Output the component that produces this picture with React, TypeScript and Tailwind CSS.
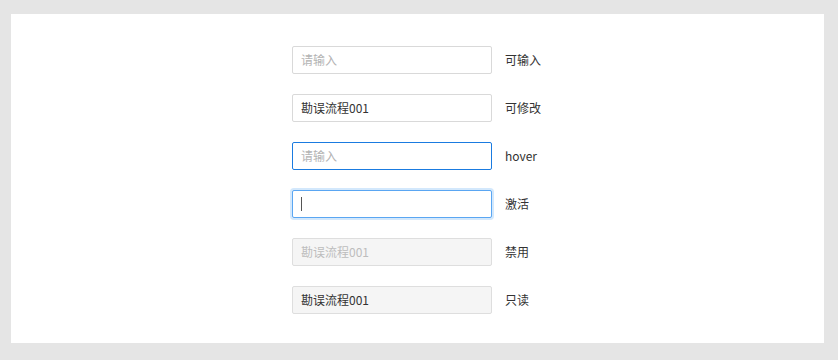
const font = "font-['Noto_Sans_CJK_SC','Noto_Sans',sans-serif]";

const rows = [
  { label: "可输入", value: "", placeholder: "请输入", kind: "default" },
  { label: "可修改", value: "勘误流程001", placeholder: "", kind: "default" },
  { label: "hover", value: "", placeholder: "请输入", kind: "hover" },
  { label: "激活", value: "", placeholder: "", kind: "focus" },
  { label: "禁用", value: "勘误流程001", placeholder: "", kind: "disabled" },
  { label: "只读", value: "勘误流程001", placeholder: "", kind: "readonly" },
];

const boxClass: Record<string, string> = {
  default: "border-[#d9d9d9] bg-white text-[#333]",
  hover: "border-[#1a7be0] bg-white text-[#333]",
  focus: "border-[#5aa6f2] bg-white text-[#333] shadow-[0_0_0_2px_#d3e8fc]",
  disabled: "border-[#dedede] bg-[#f5f5f5] text-[#bdbdbd]",
  readonly: "border-[#dedede] bg-[#f5f5f5] text-[#333]",
};

export default function App() {
  return (
    <div className={`h-[360px] w-[838px] bg-[#e5e5e5] pl-[11px] pt-[14px] ${font}`}>
      <div className="flex h-[329px] w-[813px] flex-col gap-5 bg-white pl-[281px] pt-[32px]">
        {rows.map((r, i) => (
          <div key={i} className="flex h-[28px] items-center">
            <div
              className={`flex h-[28px] w-[200px] items-center rounded-[2px] border px-2 text-[12px] ${boxClass[r.kind]}`}
            >
              {r.kind === "focus" ? (
                <span className="h-[14px] w-px bg-[#555]" />
              ) : r.value ? (
                <span>{r.value}</span>
              ) : (
                <span className="text-[#b3b3b3]">{r.placeholder}</span>
              )}
            </div>
            <span className="ml-[13px] text-[12px] text-[#333]">{r.label}</span>
          </div>
        ))}
      </div>
    </div>
  );
}
